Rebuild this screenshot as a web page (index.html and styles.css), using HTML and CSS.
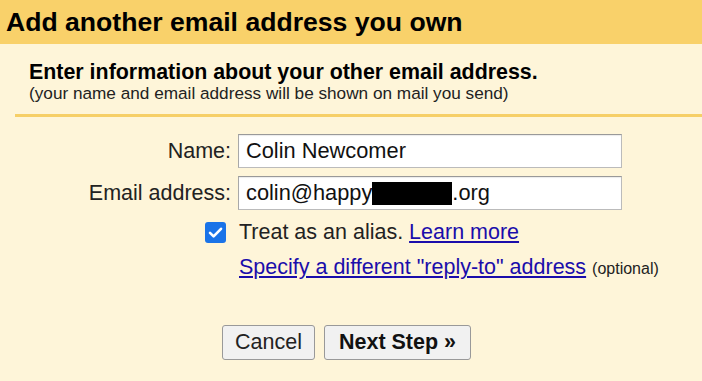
FILE: index.html
```html
<!DOCTYPE html>
<html lang="en">
<head>
    <meta charset="UTF-8">
    <meta name="viewport" content="width=device-width, initial-scale=1.0">
    <title>Add another email address you own</title>
    <link rel="stylesheet" href="styles.css">
</head>
<body>
    <div class="header">Add another email address you own</div>

    <div class="intro">
        <h2>Enter information about your other email address.</h2>
        <p>(your name and email address will be shown on mail you send)</p>
    </div>
    <div class="divider"></div>

    <div class="form">
        <label class="label">Name:</label>
        <div class="field">Colin Newcomer</div>

        <label class="label">Email address:</label>
        <div class="field">colin@happy<span class="redacted"></span>.org</div>

        <span class="check">
            <svg width="21" height="21" viewBox="0 0 21 21">
                <rect x="0" y="0" width="21" height="21" rx="3" fill="#1a73e8"/>
                <path d="M5 10.8 L8.6 14.4 L16 6.8" fill="none" stroke="#fff" stroke-width="2.6" stroke-linecap="round" stroke-linejoin="round"/>
            </svg>
        </span>
        <div class="option">Treat as an alias. <a href="#">Learn more</a></div>

        <span></span>
        <div class="option"><a href="#">Specify a different "reply-to" address</a> <span class="small">(optional)</span></div>
    </div>

    <div class="buttons">
        <button class="btn">Cancel</button>
        <button class="btn btn-next">Next Step »</button>
    </div>
</body>
</html>
```

FILE: styles.css
```css
body {
    margin: 0;
    background: #fef5d9;
    font-family: "Liberation Sans", Arial, sans-serif;
    color: #111;
    overflow: hidden;
}
/* Заголовок */
.header {
    background: #f9d16a;
    height: 44px;
    line-height: 44px;
    padding-left: 6px;
    font-size: 26.6px;
    font-weight: bold;
    color: #000;
}
.intro {
    padding: 16px 0 0 29px;
}
.intro h2 {
    margin: 0;
    font-size: 21.4px;
    line-height: 24px;
    color: #000;
}
.intro p {
    margin: 0;
    font-size: 17.2px;
    line-height: 19px;
    color: #222;
}
.divider {
    margin: 11px 0 0 15px;
    border-top: 3px solid #f6cf67;
}
/* Форма */
.form {
    display: grid;
    grid-template-columns: 231px 384px;
    column-gap: 7px;
    row-gap: 8px;
    margin-top: 17px;
    font-size: 21.5px;
}
.label {
    text-align: right;
    align-self: center;
    color: #222;
}
.field {
    height: 34px;
    box-sizing: border-box;
    background: #fff;
    border: 1px solid #bbb;
    border-top-color: #999;
    border-left-color: #a8a8a8;
    box-shadow: inset 0 1px 1px rgba(0,0,0,0.08);
    padding-left: 7px;
    line-height: 32px;
    font-size: 21.8px;
    color: #111;
}
.redacted {
    display: inline-block;
    width: 80px;
    height: 23px;
    background: #000;
    vertical-align: -5px;
}
.check {
    justify-self: end;
    align-self: center;
    margin-right: 5px;
    height: 21px;
}
.check svg {
    display: block;
}
.option {
    padding-left: 1px;
    line-height: 24px;
    white-space: nowrap;
    color: #222;
}
.form .check, .form .check + .option {
    margin-top: 2px;
}
.form .option + span + .option {
    margin-top: 3px;
}
.option a {
    color: #1a0dab;
}
.small {
    font-size: 16px;
}
/* Кнопки */
.buttons {
    display: flex;
    gap: 9px;
    padding-left: 222px;
    margin-top: 44px;
}
.btn {
    height: 35px;
    font-family: "Liberation Sans", Arial, sans-serif;
    font-size: 21.5px;
    color: #222;
    background: #f1f1f1;
    border: 1px solid #999;
    border-radius: 3px;
    padding: 0 12px;
}
.btn-next {
    font-weight: bold;
    color: #111;
    padding: 0 14px;
}
```
